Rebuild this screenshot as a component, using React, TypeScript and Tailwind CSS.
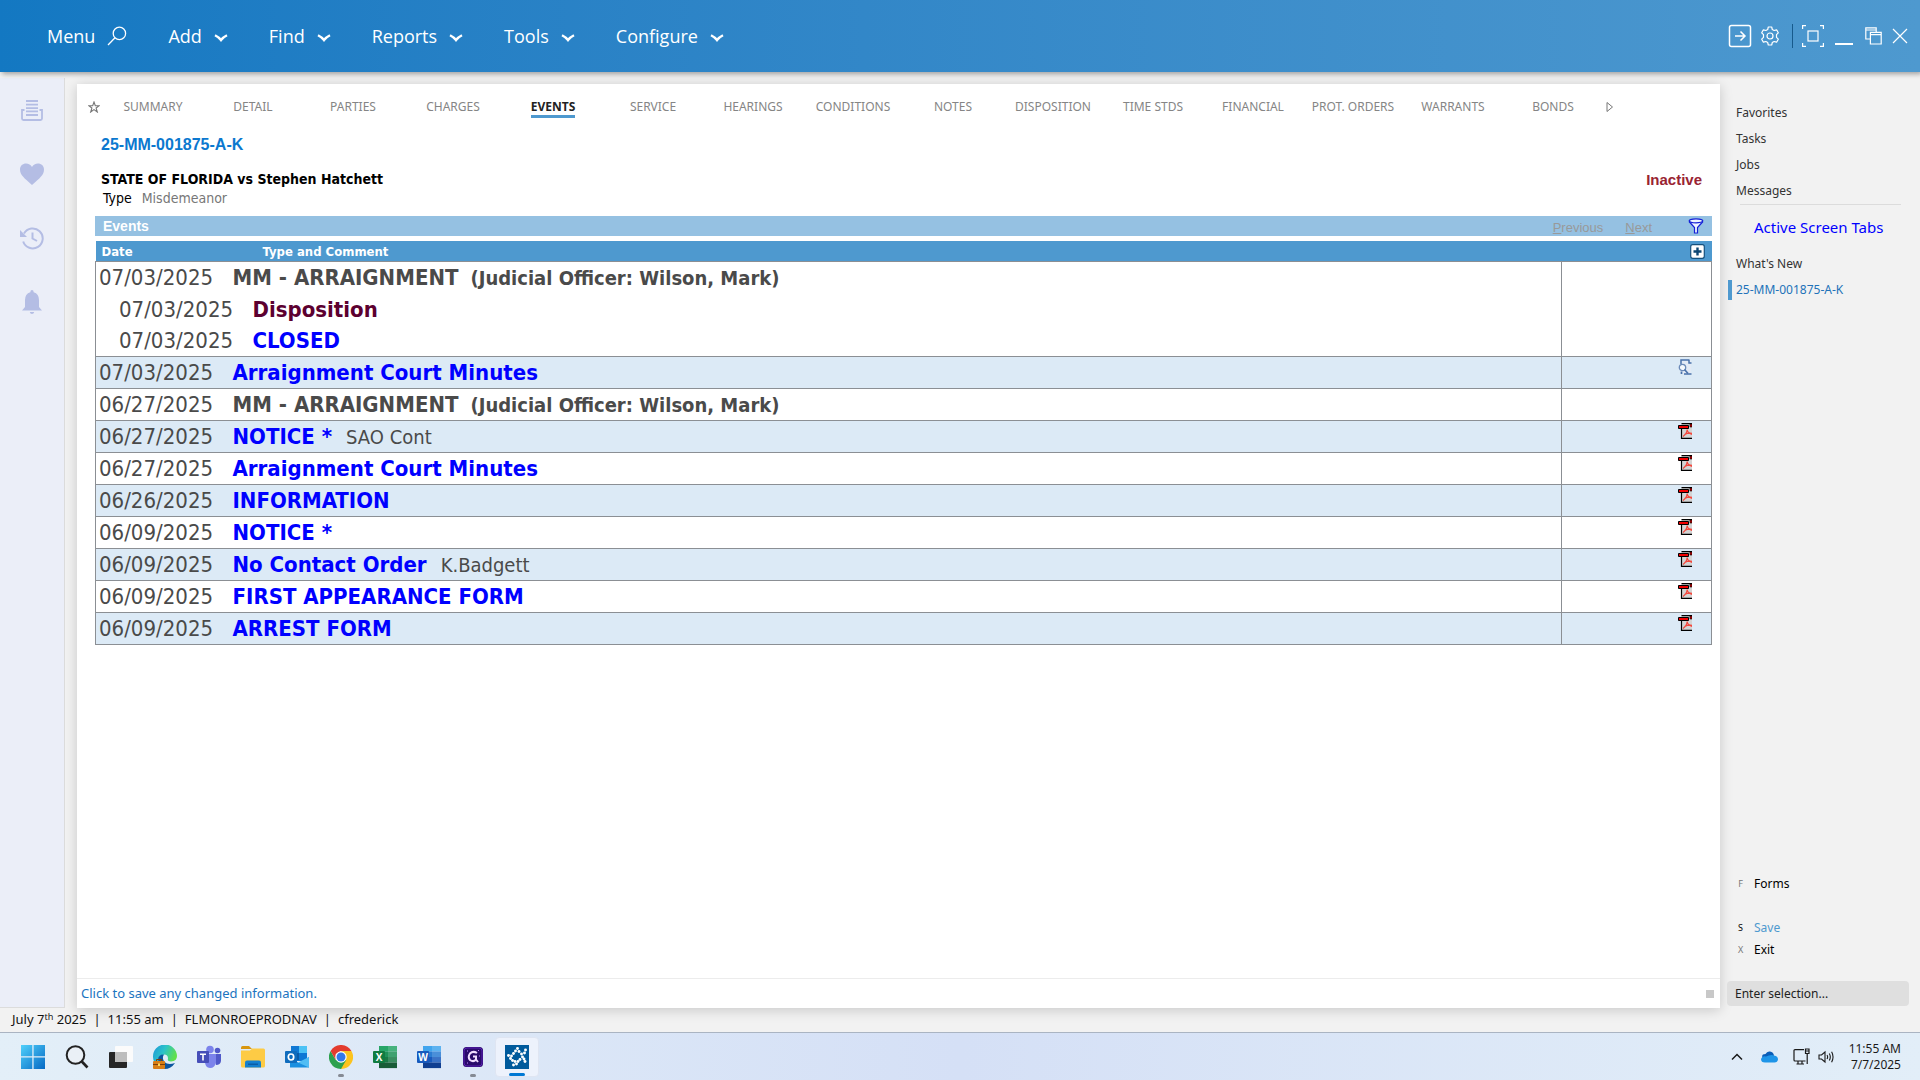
import React from "react";

const tahoma = "font-['DejaVu_Sans_Condensed','Noto_Sans',sans-serif]";
const arial = "font-['Liberation_Sans',Arial,sans-serif]";

const menus = ["Add", "Find", "Reports", "Tools", "Configure"];

const tabs = [
  "SUMMARY", "DETAIL", "PARTIES", "CHARGES", "EVENTS", "SERVICE", "HEARINGS", "CONDITIONS",
  "NOTES", "DISPOSITION", "TIME STDS", "FINANCIAL", "PROT. ORDERS", "WARRANTS", "BONDS",
];

type Doc = "pdf" | "view";
type Line = { date: string; title: string; tone: "gray" | "maroon" | "blue"; officer?: string; comment?: string };
type EventRow = Line & { doc?: Doc; children?: Line[] };

const officer = "(Judicial Officer: Wilson, Mark)";

const events: EventRow[] = [
  {
    date: "07/03/2025", title: "MM - ARRAIGNMENT", officer, tone: "gray",
    children: [
      { date: "07/03/2025", title: "Disposition", tone: "maroon" },
      { date: "07/03/2025", title: "CLOSED", tone: "blue" },
    ],
  },
  { date: "07/03/2025", title: "Arraignment Court Minutes", tone: "blue", doc: "view" },
  { date: "06/27/2025", title: "MM - ARRAIGNMENT", officer, tone: "gray" },
  { date: "06/27/2025", title: "NOTICE *", comment: "SAO Cont", tone: "blue", doc: "pdf" },
  { date: "06/27/2025", title: "Arraignment Court Minutes", tone: "blue", doc: "pdf" },
  { date: "06/26/2025", title: "INFORMATION", tone: "blue", doc: "pdf" },
  { date: "06/09/2025", title: "NOTICE *", tone: "blue", doc: "pdf" },
  { date: "06/09/2025", title: "No Contact Order", comment: "K.Badgett", tone: "blue", doc: "pdf" },
  { date: "06/09/2025", title: "FIRST APPEARANCE FORM", tone: "blue", doc: "pdf" },
  { date: "06/09/2025", title: "ARREST FORM", tone: "blue", doc: "pdf" },
];

const tones = { gray: "text-[#4a4a4a]", maroon: "text-[#5c0030]", blue: "text-[#0000ff]" };

function Chevron() {
  return (
    <svg width="14" height="8" viewBox="0 0 14 8" fill="none" stroke="#fff" strokeWidth="2.4">
      <path d="M1 1.2Q5 3.2 7 6Q9 3.2 13 1.2" />
    </svg>
  );
}

function TopBar() {
  return (
    <header className="relative z-10 flex h-[72px] shrink-0 items-center justify-between bg-linear-to-r from-[#1378c2] to-[#4e99cf] pr-3 pl-[47px] text-white shadow-[2px_2px_5px_rgba(0,0,0,0.35)]">
      <nav className="flex items-center gap-[41px] font-['Open_Sans','Noto_Sans',sans-serif] text-lg">
        <button className="flex items-center gap-3">
          Menu
          <svg width="20" height="20" viewBox="0 0 20 20" fill="none" stroke="#fff" strokeWidth="1.3">
            <circle cx="12.4" cy="7.4" r="6.2" />
            <path d="M8 11.8L1 19" />
          </svg>
        </button>
        {menus.map((m) => (
          <button key={m} className="flex items-center gap-3">
            {m}
            <span className="pt-1"><Chevron /></span>
          </button>
        ))}
      </nav>
      <div className="flex items-center">
        <button aria-label="Open" className="mr-2">
          <svg width="24" height="24" viewBox="0 0 24 24" fill="none" stroke="#fff" strokeWidth="1.5">
            <rect x="1.5" y="1.5" width="21" height="21" rx="2" />
            <path d="M7 12H17M12.5 7.5L17 12L12.5 16.5" />
          </svg>
        </button>
        <button aria-label="Settings" className="mr-3">
          <svg width="20" height="20" viewBox="0 0 20 20" fill="none" stroke="#fff" strokeWidth="1.2" strokeLinejoin="round">
            <path d="M8.3 1H11.7L12.3 3.5L14.1 4.5L16.6 3.8L18.3 6.8L16.5 8.7V11.3L18.3 13.2L16.6 16.2L14.1 15.5L12.3 16.5L11.7 19H8.3L7.7 16.5L5.9 15.5L3.4 16.2L1.7 13.2L3.5 11.3V8.7L1.7 6.8L3.4 3.8L5.9 4.5L7.7 3.5Z" />
            <circle cx="10" cy="10" r="3" />
          </svg>
        </button>
        <span className="mr-2 h-6 w-px bg-[#175a8c]" />
        <button aria-label="Full screen" className="mr-[10px]">
          <svg width="24" height="24" viewBox="0 0 24 24" fill="none" stroke="#fff" strokeWidth="1.2">
            <path d="M5 1.6H1.6V5M19 1.6H22.4V5M5 22.4H1.6V19M19 22.4H22.4V19" />
            <rect x="7" y="7" width="10" height="10" />
          </svg>
        </button>
        <button aria-label="Minimize" className="mr-3 pt-4"><span className="block h-[2px] w-[18px] bg-white" /></button>
        <button aria-label="Restore" className="mr-[10px]">
          <svg width="17" height="18" viewBox="0 0 17 18" fill="none" stroke="#fff" strokeWidth="1.2">
            <path d="M5 12H.8V.8H11.2V5M.8 3H11.2" />
            <path d="M5.4 5.4H16.2V17H5.4ZM5.4 7.6H16.2" />
          </svg>
        </button>
        <button aria-label="Close">
          <svg width="16" height="16" viewBox="0 0 16 16" stroke="#fff" strokeWidth="1.2"><path d="M1 1L15 15M15 1L1 15" /></svg>
        </button>
      </div>
    </header>
  );
}

function Rail() {
  return (
    <aside className="mt-[6px] flex w-[65px] shrink-0 flex-col items-center gap-10 border-r border-b border-[#dcdcdc] bg-[#ebeef8] pt-5 text-[#b4bde4]">
      <button aria-label="Documents">
        <svg width="24" height="24" viewBox="0 0 24 24" fill="none" stroke="currentColor" strokeWidth="1.8">
          <path d="M6 3H18M6 6.6H18M6 10.2H18M6 13.4H18M6 17H18" />
          <path d="M4.5 12H2V20.5Q2 22 3.500 22H20.500Q22 22 22 20.500V12H19.500" />
        </svg>
      </button>
      <button aria-label="Favorites">
        <svg width="24" height="24" viewBox="0 0 24 24" fill="currentColor">
          <path d="M12 23C4 16 0 12.800 0 7.500C0 3.800 2.800 1.500 6 1.500C8.500 1.500 10.900 2.800 12 5C13.100 2.800 15.500 1.500 18 1.500C21.200 1.500 24 3.800 24 7.500C24 12.800 20 16 12 23Z" />
        </svg>
      </button>
      <button aria-label="History">
        <svg width="24" height="24" viewBox="0 0 24 24" fill="none" stroke="currentColor" strokeWidth="2">
          <path d="M4 7.500A10 10 0 1 1 3.200 15.500M12.500 6.500V12.500L17 15" />
          <path d="M0 4V11H7Z" fill="currentColor" stroke="none" />
        </svg>
      </button>
      <button aria-label="Notifications">
        <svg width="24" height="24" viewBox="0 0 24 24" fill="currentColor">
          <path d="M12 0Q13.600 0 13.700 2.200Q19 3.800 19 10V17L22 20.500H2L5 17V10Q5 3.800 10.300 2.200Q10.400 0 12 0ZM9.800 22H14.200Q13.800 24 12 24Q10.200 24 9.800 22Z" />
        </svg>
      </button>
    </aside>
  );
}

function Tabs() {
  return (
    <nav className="flex h-[45px] items-center pl-2">
      <button aria-label="Pin" className="flex w-[18px] justify-center">
        <svg width="12" height="12" viewBox="0 0 12 12" fill="none" stroke="#777" strokeWidth="1.100">
          <path d="M6 1L7.300 4.700H11.200L8.100 7L9.300 11L6 8.600L2.700 11L3.900 7L.8 4.700H4.700Z" />
        </svg>
      </button>
      {tabs.map((t) => (
        <button key={t} className="flex w-[100px] justify-center font-['Noto_Sans',sans-serif] text-xs text-[#858585]">
          {t === "EVENTS" ? (
            <span className="mt-[3px] border-b-[3px] border-[#4e99cf] font-bold text-[#222]">{t}</span>
          ) : t}
        </button>
      ))}
      <button aria-label="More tabs" className="pl-[3px]">
        <svg width="8" height="12" viewBox="0 0 8 12" fill="none" stroke="#777"><path d="M1 1.500V10.500L6.500 6Z" /></svg>
      </button>
    </nav>
  );
}

function DocIcon({ kind }: { kind: Doc }) {
  if (kind === "view") {
    return (
      <svg width="14" height="16" viewBox="0 0 14 16" fill="none">
        <path d="M3 1H13V15H3Z" fill="#e3eaf5" />
        <path d="M3 5V1H11.500M11 1V4H13.500M6 15H13.500" stroke="#4a72ab" strokeWidth="1.500" />
        <circle cx="4.500" cy="8.500" r="3.200" fill="#f4f8fd" stroke="#6b8ab8" strokeWidth="1.300" />
        <path d="M3.500 12.500V15M6.500 10.500L10 14.500" stroke="#4a72ab" strokeWidth="1.700" />
      </svg>
    );
  }
  return (
    <svg width="14" height="16" viewBox="0 0 14 16" fill="none">
      <path d="M3.500 .6H14V15.400H3.500Z" fill="#d4d4d4" />
      <path d="M3.500 6V15.400H14M3.500 .6H14" stroke="#000" strokeWidth="1.200" />
      <path d="M.5 2.500H10.500V5.500H.5Z" fill="#f00000" stroke="#000" />
      <path d="M12 1V4H14V1Z" fill="#c00" stroke="#000" strokeWidth=".6" />
      <path d="M5 13.500Q9 10.500 9.200 6.500Q9.500 10 14 11.500M6.500 11.500Q10 9.800 14 10.300" stroke="#f4473c" strokeWidth="1.200" />
    </svg>
  );
}

function LineCells({ line, indent }: { line: Line; indent?: boolean }) {
  return (
    <>
      <td className={indent ? "pt-px pl-[23px] text-[#4a4a4a]" : "pt-px pl-[3px] text-[#4a4a4a]"}>{line.date}</td>
      <td className={indent ? "pt-px pl-[21px]" : "pt-px pl-px"}>
        <div className="flex items-baseline whitespace-nowrap">
          {line.tone === "gray" ? (
            <span className="flex items-baseline gap-3 font-bold text-[#4a4a4a]">
              {line.title}
              <span className="text-xl">{line.officer}</span>
            </span>
          ) : (
            <a href="#" className={"font-bold " + tones[line.tone]}>{line.title}</a>
          )}
          {line.comment && <span className="pl-[14px] text-xl text-[#4a4a4a]">{line.comment}</span>}
        </div>
      </td>
    </>
  );
}

function Events() {
  return (
    <section className="mr-2 ml-[18px]">
      <div className="mb-[5px] flex h-5 items-center bg-[#95c1e2] pr-2 pl-2">
        <h2 className={arial + " flex-1 text-sm font-bold text-white"}>Events</h2>
        <div className={arial + " flex gap-[22px] pt-1 pr-[36px] text-[13px] text-[#999] [text-shadow:1px_1px_0_#fff]"}>
          <button><u>P</u>revious</button>
          <button><u>N</u>ext</button>
        </div>
        <button aria-label="Filter">
          <svg width="16" height="16" viewBox="0 0 16 16" fill="#eef6ff" stroke="#1420d8" strokeWidth="1.200">
            <path d="M1 3.500L6.500 9.500V15H9.500V9.500L15 3.500" />
            <ellipse cx="8" cy="2.800" rx="6.800" ry="2" />
          </svg>
        </button>
      </div>
      <table className={tahoma + " w-full table-fixed border-collapse text-[22px] leading-[30px]"}>
        <colgroup>
          <col className="w-[136px]" />
          <col />
          <col className="w-[150px]" />
        </colgroup>
        <thead>
          <tr className="h-5 bg-[#4e99cf] text-left text-[13px] leading-[19px] text-white">
            <th className="pt-px pl-[6px]">Date</th>
            <th className="pt-px pl-[31px]">Type and Comment</th>
            <th>
              <button aria-label="Add event" className="mr-[7px] ml-auto block">
                <svg width="15" height="15" viewBox="0 0 15 15">
                  <rect x=".7" y=".7" width="13.600" height="13.600" rx="2" fill="#fff" stroke="#15507d" strokeWidth="1.200" />
                  <path d="M7.500 3.500V11.500M3.500 7.500H11.500" stroke="#0d4673" strokeWidth="2.400" />
                </svg>
              </button>
            </th>
          </tr>
        </thead>
        {events.map((e, i) => (
          <tbody key={i} className={i % 2 ? "border border-[#8b8f94] bg-[#dceaf6]" : "border border-[#8b8f94] bg-white"}>
            <tr className="h-8">
              <LineCells line={e} />
              <td rowSpan={1 + (e.children?.length ?? 0)} className="border-l border-[#8b8f94] align-top">
                {e.doc && (
                  <button aria-label="Open document" className="mt-[2px] mr-[19px] ml-auto block">
                    <DocIcon kind={e.doc} />
                  </button>
                )}
              </td>
            </tr>
            {e.children?.map((c, j) => (
              <tr key={j} className="h-[31px]"><LineCells line={c} indent /></tr>
            ))}
          </tbody>
        ))}
      </table>
    </section>
  );
}

function CasePanel() {
  return (
    <main className="mt-3 ml-3 flex min-w-0 flex-1 flex-col bg-white shadow-[0_2px_12px_rgba(0,0,0,0.18)]">
      <Tabs />
      <div className="pr-[18px] pl-6">
        <h1 className={arial + " pt-[6px] text-base leading-5 font-bold text-[#0b78cf]"}>25-MM-001875-A-K</h1>
        <div className="flex items-center justify-between pt-[15px]">
          <strong className={tahoma + " text-sm leading-[19px]"}>STATE OF FLORIDA vs Stephen Hatchett</strong>
          <strong className={arial + " text-[15px] leading-[19px] text-[#992432]"}>Inactive</strong>
        </div>
        <p className={tahoma + " flex gap-[10px] pb-2 pl-[2px] text-sm leading-[19px]"}>
          <span>Type</span>
          <span className="text-[#777]">Misdemeanor</span>
        </p>
      </div>
      <Events />
      <footer className="mt-auto flex h-[30px] items-center justify-between border-t border-[#ececec] pt-px pr-[6px] pl-1">
        <button className="text-[13px] text-[#1b74c0]">Click to save any changed information.</button>
        <span className="size-2 bg-[#c8c8c8]" />
      </footer>
    </main>
  );
}

function SidePanel() {
  return (
    <aside className="flex w-[200px] shrink-0 flex-col pt-7 pr-[11px] pl-[7px] text-xs text-[#333]">
      <nav className="flex flex-col pl-[9px] leading-[26px]">
        <a href="#">Favorites</a>
        <a href="#">Tasks</a>
        <a href="#">Jobs</a>
        <a href="#">Messages</a>
      </nav>
      <hr className="mr-2 ml-[13px] border-[#dcdcdc]" />
      <h2 className="pt-[10px] pb-3 pl-[27px] text-[15px] leading-6 text-[#0000ff]">Active Screen Tabs</h2>
      <nav className="flex flex-col leading-[26px]">
        <a href="#" className="pl-[9px]">What's New</a>
        <a href="#" className="mt-[3px] ml-px border-l-4 border-[#4e99cf] pl-1 leading-5 text-[#2272b9]">25-MM-001875-A-K</a>
      </nav>
      <div className="mt-auto flex flex-col pl-[11px] leading-[22px] text-black">
        <button className="mb-[22px] flex gap-[11px]"><kbd className="w-[5px] font-[inherit] text-[9px] text-[#777]">F</kbd>Forms</button>
        <button className="flex gap-[11px]"><kbd className="w-[5px] font-[inherit] text-[9px]">S</kbd><span className="text-[#4e99cf]">Save</span></button>
        <button className="flex gap-[11px]"><kbd className="w-[5px] font-[inherit] text-[9px] text-[#777]">X</kbd>Exit</button>
      </div>
      <input
        aria-label="Enter selection"
        placeholder="Enter selection..."
        className="mt-5 mb-[2px] h-[25px] w-full rounded bg-[#dfdfdf] pl-2 text-xs placeholder:text-[#222]"
      />
    </aside>
  );
}

function OfficeIcon({ letter, tile, bands }: { letter: string; tile: string; bands: string[] }) {
  return (
    <svg width="24" height="24" viewBox="0 0 24 24">
      {bands.map((b, i) => <rect key={i} x="6" y={1 + i * 5.500} width="18" height="5.600" fill={b} />)}
      {bands.slice(0, 3).map((b, i) => <rect key={i} x="15" y={1 + i * 5.500} width="9" height="5.600" fill="#fff" opacity=".15" />)}
      <rect x="0" y="6" width="12" height="12" rx="1" fill={tile} />
      <text x="6" y="15.500" textAnchor="middle" fontSize="10" fontWeight="700" fill="#fff" fontFamily="Open Sans">{letter}</text>
    </svg>
  );
}

const courtDots = [
  [3.5, 10.5], [6.5, 11], [8.5, 8.5], [10.5, 6], [12.5, 3.5], [14, 6.5], [16.500, 9], [19.500, 8], [20.500, 5],
  [17.500, 12], [19, 14], [20, 16.500], [15, 14.500], [13, 16.500], [11.500, 19], [8.500, 20], [10, 16.500], [7.500, 15.500], [5.500, 13.500],
];

const apps: { name: string; state?: "open" | "active"; icon: React.ReactNode }[] = [
  {
    name: "Start",
    icon: (
      <svg width="24" height="24" viewBox="0 0 24 24">
        <defs><linearGradient id="win" x1="0" y1="0" x2="1" y2="1"><stop stopColor="#4fd0fb" /><stop offset="1" stopColor="#0669c4" /></linearGradient></defs>
        <path d="M0 0H11.300V11.300H0ZM12.600 0H24V11.300H12.600ZM0 12.600H11.300V24H0ZM12.600 12.600H24V24H12.600Z" fill="url(#win)" />
      </svg>
    ),
  },
  {
    name: "Search",
    icon: (
      <svg width="24" height="24" viewBox="0 0 24 24" fill="none" stroke="#222" strokeWidth="2">
        <circle cx="10.500" cy="10" r="8.800" fill="#eaf0f6" /><path d="M16.800 16.500L22.500 22.500" strokeWidth="2.600" />
      </svg>
    ),
  },
  {
    name: "Task view",
    icon: (
      <svg width="24" height="24" viewBox="0 0 24 24">
        <rect x="0" y="7" width="18" height="16" rx="1" fill="#262626" />
        <rect x="6" y="1" width="18" height="16" rx="1" fill="#fbfbfb" />
        <rect x="6" y="7" width="12" height="10" fill="#bdbdbd" />
      </svg>
    ),
  },
  {
    name: "Edge",
    icon: (
      <svg width="26" height="24" viewBox="0 0 26 24">
        <defs><linearGradient id="edge" x1="0" y1="0" x2="1" y2=".4"><stop stopColor="#1b96d8" /><stop offset=".5" stopColor="#2cc3c9" /><stop offset="1" stopColor="#62e04a" /></linearGradient></defs>
        <path d="M1 12A12 12 0 0 1 25 11Q25 16 19 16.500Q15 16.500 16 13.500Q16 9.500 12 9.500Q6 10 6 17L7 20Q1 18 1 12Z" fill="url(#edge)" />
        <path d="M6 14Q7 9 12 9.500Q9.500 13 12.500 17Q16 20.500 23 18Q19 24 12.500 24Q6 22 6 14Z" fill="#0b559f" />
        <rect x="1" y="16" width="12" height="8" rx="1" fill="#d77e16" />
        <path d="M1 19.500H13M4.500 16V14.500H9.500V16" stroke="#7e3f08" fill="none" /><rect x="6" y="18.500" width="2" height="2.500" fill="#ffd75a" />
      </svg>
    ),
  },
  {
    name: "Teams",
    icon: (
      <svg width="24" height="24" viewBox="0 0 24 24">
        <circle cx="20.500" cy="5.500" r="2.800" fill="#5059c9" /><circle cx="13" cy="4.500" r="3.800" fill="#7b83eb" />
        <path d="M16 9H24V16Q23.500 20 19 20Z" fill="#5059c9" />
        <path d="M8 9H19V17Q18 23 13 23Q8 22.500 8 17Z" fill="#7b83eb" />
        <rect x="0" y="6" width="12" height="12" rx="1" fill="#464eb8" />
        <path d="M3 9.300H9M6 9.300V15.500" stroke="#fff" strokeWidth="1.600" />
      </svg>
    ),
  },
  {
    name: "File Explorer",
    icon: (
      <svg width="24" height="24" viewBox="0 0 24 24">
        <path d="M0 2.500Q0 1 1.500 1H8L11 4H0Z" fill="#d8960f" />
        <path d="M0 5.500H9L11 3.500H22.500Q24 3.500 24 5V21Q24 22.500 22.500 22.500H1.500Q0 22.500 0 21Z" fill="#fdcb45" />
        <path d="M4 22.500V17.500Q4 15.500 6 15.500H18Q20 15.500 20 17.500V22.500Z" fill="#1480cf" /><path d="M7 18.500H17V20H7Z" fill="#0b5da6" />
      </svg>
    ),
  },
  {
    name: "Outlook",
    icon: (
      <svg width="24" height="24" viewBox="0 0 24 24">
        <rect x="6" y="1" width="16" height="15" fill="#0f78d4" /><rect x="14" y="1" width="8" height="7" fill="#4cc2f5" /><rect x="6" y="8" width="8" height="7" fill="#0a5ca8" />
        <path d="M5 13L14 18L24 12V22.500H5Z" fill="#1a8fe0" /><path d="M24 12V22.500L13 17.500Z" fill="#50bdf4" />
        <rect x="0" y="6" width="12" height="12" rx="1" fill="#0f6cbd" /><ellipse cx="6" cy="12" rx="2.700" ry="3" fill="none" stroke="#fff" strokeWidth="1.700" />
      </svg>
    ),
  },
  {
    name: "Chrome",
    state: "open",
    icon: (
      <svg width="24" height="24" viewBox="0 0 24 24">
        <path d="M12 12V6H22.400A12 12 0 0 1 12 24Z" fill="#fcc31e" />
        <path d="M12 12L17.200 15L12 24A12 12 0 0 1 1.600 6L6.800 15Z" fill="#2da04e" />
        <path d="M1.600 6A12 12 0 0 1 22.400 6H12L6.800 9V15Z" fill="#e33b2e" />
        <circle cx="12" cy="12" r="5.700" fill="#fff" /><circle cx="12" cy="12" r="4.500" fill="#3478ea" />
      </svg>
    ),
  },
  { name: "Excel", icon: <OfficeIcon letter="X" tile="#107c41" bands={["#27a567", "#1f9158", "#187a45", "#185c37"]} /> },
  { name: "Word", icon: <OfficeIcon letter="W" tile="#185abd" bands={["#41a5ee", "#2b7cd3", "#185abd", "#103f91"]} /> },
  {
    name: "G",
    state: "open",
    icon: (
      <svg width="20" height="20" viewBox="0 0 20 20">
        <rect width="20" height="20" rx="3.500" fill="#2a0a6b" /><rect x="1" y="1" width="18" height="18" rx="3" fill="none" stroke="#5b21b6" />
        <path d="M14 6Q10 3.500 7 6.500Q4.500 10 7 13Q10.500 15.500 13 12.500V9.500H10M13 12.500L15 15" fill="none" stroke="#f0dcff" strokeWidth="2" />
        <path d="M4 4H5M15 3.500H16M4 16H5M16 9H17" stroke="#c58bff" />
      </svg>
    ),
  },
  {
    name: "Court",
    state: "active",
    icon: (
      <svg width="24" height="24" viewBox="0 0 24 24">
        <rect width="24" height="24" fill="#005a9c" />
        <g fill="#fff">
          {courtDots.map(([x, y]) => <circle key={x + "-" + y} cx={x} cy={y} r="1.450" />)}
        </g>
      </svg>
    ),
  },
];

function Taskbar() {
  return (
    <footer className="flex h-12 shrink-0 items-center justify-between border-t border-[#aab4c2] bg-linear-to-r from-[#e3eff8] via-[#d5e0f6] to-[#e2eef8] pr-[19px] pl-[11px] text-[#1a1a1a]">
      <div className="flex">
        {apps.map((a) => (
          <button
            key={a.name}
            aria-label={a.name}
            className={
              a.state === "active"
                ? "relative flex h-10 w-11 items-center justify-center rounded border border-[#dfe5f2] bg-[#edf2fc]"
                : "relative flex h-10 w-11 items-center justify-center"
            }
          >
            {a.icon}
            {a.state === "open" && <span className="absolute bottom-0 h-[3px] w-[6px] rounded-full bg-[#858a94]" />}
            {a.state === "active" && <span className="absolute bottom-0 h-[3px] w-4 rounded-full bg-[#0078d4]" />}
          </button>
        ))}
      </div>
      <div className="flex items-center">
        <button aria-label="Hidden icons" className="mr-[18px]">
          <svg width="12" height="8" viewBox="0 0 12 8" fill="none" stroke="#1a1a1a" strokeWidth="1.500"><path d="M1 6.500L6 1.500L11 6.500" /></svg>
        </button>
        <button aria-label="OneDrive" className="mr-[15px]">
          <svg width="17" height="12" viewBox="0 0 17 12">
            <path d="M2 8Q-.5 3 4.500 3Q6 0 9 .5Q12.500 1 13 4.500L8 9Z" fill="#0a5eb8" />
            <path d="M4 11.500Q0 11.500 0 8Q1 4.500 5 5.500Q10 3 13 4.500Q17 5 17 8.500Q16.500 11.500 13.500 11.500Z" fill="#1e95e8" />
          </svg>
        </button>
        <button aria-label="Network" className="mr-2">
          <svg width="17" height="17" viewBox="0 0 17 17" fill="none" stroke="#1a1a1a" strokeWidth="1.200">
            <path d="M11 1.600H2Q1 1.600 1 2.600V12Q1 13 2 13H12.500M5 13V16M9 13V16M3.500 16H11M12.500 1H16V5.500H12.500ZM14.200 5.500V16M12.500 3H16" />
          </svg>
        </button>
        <button aria-label="Volume" className="mr-[14px]">
          <svg width="17" height="14" viewBox="0 0 17 14" fill="none" stroke="#1a1a1a" strokeWidth="1.100">
            <path d="M1 5H3.500L7 2V12L3.500 9H1ZM9 5Q10.300 7 9 9M11.300 3.500Q13.300 7 11.300 10.500M13.600 1.800Q16.500 7 13.600 12.200" />
          </svg>
        </button>
        <time className="text-right text-xs leading-4">11:55 AM<br />7/7/2025</time>
      </div>
    </footer>
  );
}

export default function App() {
  return (
    <div className="flex min-h-screen flex-col bg-[#f2f2f2] font-['Noto_Sans','Open_Sans',sans-serif]">
      <TopBar />
      <div className="flex flex-1">
        <Rail />
        <CasePanel />
        <SidePanel />
      </div>
      <div className="flex h-6 shrink-0 items-center gap-[7px] pl-3 text-[13px] text-[#111]">
        <span>July 7<span className="text-sm leading-none">ᵗʰ</span> 2025</span>
        <span>|</span><span>11:55 am</span><span>|</span><span>FLMONROEPRODNAV</span><span>|</span><span>cfrederick</span>
      </div>
      <Taskbar />
    </div>
  );
}
